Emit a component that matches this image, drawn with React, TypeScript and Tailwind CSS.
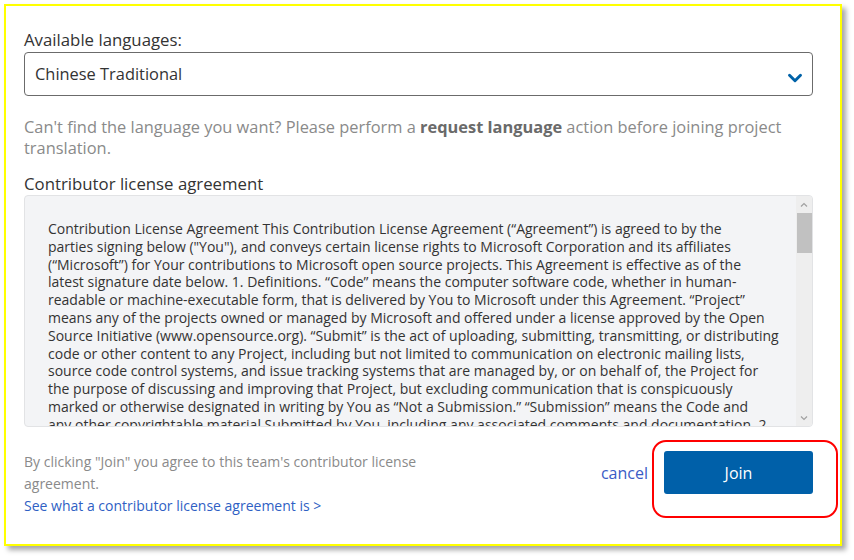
import { ChevronDown } from "lucide-react";

const agreementLines = [
  "Contribution License Agreement This Contribution License Agreement (“Agreement”) is agreed to by the",
  "parties signing below (\"You\"), and conveys certain license rights to Microsoft Corporation and its affiliates",
  "(“Microsoft”) for Your contributions to Microsoft open source projects. This Agreement is effective as of the",
  "latest signature date below. 1. Definitions. “Code” means the computer software code, whether in human-",
  "readable or machine-executable form, that is delivered by You to Microsoft under this Agreement. “Project”",
  "means any of the projects owned or managed by Microsoft and offered under a license approved by the Open",
  "Source Initiative (www.opensource.org). “Submit” is the act of uploading, submitting, transmitting, or distributing",
  "code or other content to any Project, including but not limited to communication on electronic mailing lists,",
  "source code control systems, and issue tracking systems that are managed by, or on behalf of, the Project for",
  "the purpose of discussing and improving that Project, but excluding communication that is conspicuously",
  "marked or otherwise designated in writing by You as “Not a Submission.” “Submission” means the Code and",
  "any other copyrightable material Submitted by You, including any associated comments and documentation. 2.",
];

export default function App() {
  return (
    <div className="w-[854px] h-[560px] bg-white pl-[4px] pt-[4px] font-['Open_Sans','Liberation_Sans',sans-serif]">
      <div className="w-[838px] h-[542px] border-2 border-[#ffff00] bg-white shadow-[4px_4px_5px_rgba(0,0,0,0.35)] pl-[18px] pt-[24px]">
        <div className="w-[789px]">
          <div className="text-[16.8px] leading-[20px] text-[#333]">Available languages:</div>
          <div className="mt-[2px] h-[44px] rounded-[4px] border border-[#6b6b6b] flex items-center justify-between pl-[10px] pr-[6px]">
            <span className="text-[16.4px] text-[#333]">Chinese Traditional</span>
            <ChevronDown className="mt-[8px] text-[#0062a8]" size={22} strokeWidth={3.2} />
          </div>

          <p className="mt-[20px] text-[16.4px] leading-[21px] text-[#8a8a8a]">
            Can't find the language you want? Please perform a <b className="font-bold text-[#6a6a6a]">request language</b> action before joining project translation.
          </p>

          <div className="mt-[15px] text-[16.8px] leading-[21px] text-[#333]">Contributor license agreement</div>

          <div className="mt-[1px] h-[232px] rounded-[4px] border border-[#e2e3e5] bg-[#f3f4f6] flex overflow-hidden">
            <div className="flex-1 pl-[23px] pt-[24px] overflow-hidden">
              {agreementLines.map((line) => (
                <div key={line} className="whitespace-nowrap text-[14px] leading-[17.8px] text-[#333]">
                  {line}
                </div>
              ))}
            </div>
            <div className="w-[16px] bg-[#eeeeee] flex flex-col items-center">
              <svg width="10" height="10" viewBox="0 0 10 10" className="mt-[4px]">
                <path d="M2 6.5 L5 3.5 L8 6.5" fill="none" stroke="#a0a0a0" strokeWidth="1.2" />
              </svg>
              <div className="mt-[3px] w-[15px] h-[40px] bg-[#c1c1c1]" />
              <div className="flex-1" />
              <svg width="10" height="10" viewBox="0 0 10 10" className="mb-[3px]">
                <path d="M2 3.5 L5 6.5 L8 3.5" fill="none" stroke="#a0a0a0" strokeWidth="1.2" />
              </svg>
            </div>
          </div>

          <div className="mt-[24px] flex items-start justify-between">
            <div className="text-[14px] leading-[22px]">
              <div className="text-[#8a8a8a] w-[430px]">
                By clicking "Join" you agree to this team's contributor license agreement.
              </div>
              <a className="text-[#2f5fc4]">See what a contributor license agreement is &gt;</a>
            </div>
            <div className="flex items-center gap-[16px]">
              <a className="text-[16px] text-[#3a5cc6]">cancel</a>
              <div className="relative">
                <button className="w-[149px] h-[43px] rounded-[3px] bg-[#0060a9] text-white text-[16px]">Join</button>
                <div className="absolute left-[-12px] top-[-11px] w-[186px] h-[78px] rounded-[14px] border-2 border-[#ff0000]" />
              </div>
            </div>
          </div>
        </div>
      </div>
    </div>
  );
}
